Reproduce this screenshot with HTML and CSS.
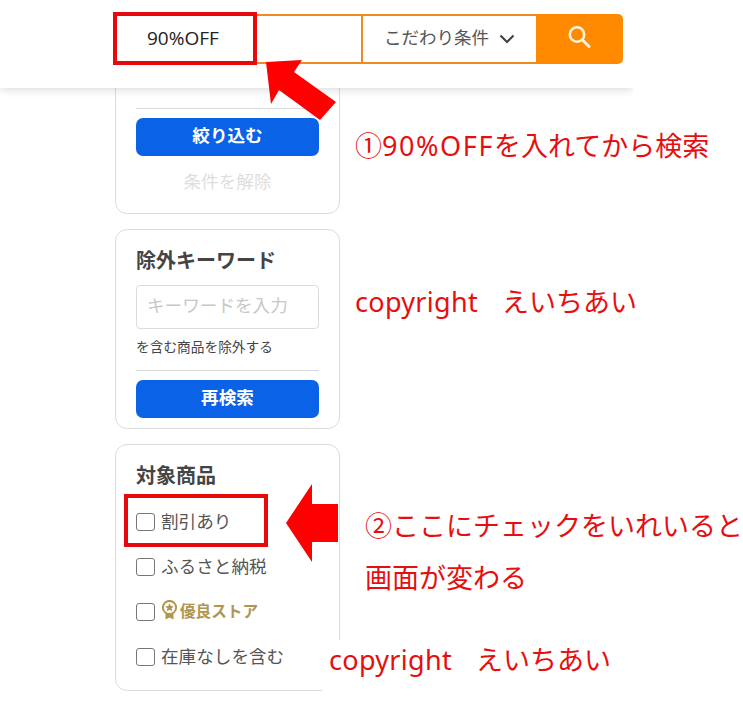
FILE: index.html
```html
<!DOCTYPE html>
<html lang="ja">
<head>
<meta charset="utf-8">
<title>検索</title>
<link rel="stylesheet" href="styles.css">
</head>
<body>
<div class="page">
  <header class="header">
    <div class="search">
      <div class="keyword">90%OFF</div>
      <div class="field"></div>
      <div class="filter">こだわり条件
        <svg class="chev" width="16" height="10" viewBox="0 0 16 10"><path d="M1.5 1.5 8 8l6.5-6.5" fill="none" stroke="#444" stroke-width="2.2"/></svg>
      </div>
      <button class="go" aria-label="検索">
        <svg width="26" height="26" viewBox="0 0 26 26"><circle cx="10" cy="10.5" r="7.2" fill="none" stroke="#fff3dc" stroke-width="2.6"/><path d="M15.5 16 22 22.5" stroke="#fff3dc" stroke-width="3" stroke-linecap="round"/></svg>
      </button>
    </div>
  </header>

  <main class="side">
    <section class="card card-first">
      <div class="rule"></div>
      <button class="btn">絞り込む</button>
      <div class="clear">条件を解除</div>
    </section>

    <section class="card card-exclude">
      <h2 class="title">除外キーワード</h2>
      <div class="input">キーワードを入力</div>
      <p class="note">を含む商品を除外する</p>
      <div class="rule rule-b"></div>
      <button class="btn">再検索</button>
    </section>

    <section class="card card-target">
      <h2 class="title">対象商品</h2>
      <ul class="checks">
        <li class="check"><span class="box"></span>割引あり</li>
        <li class="check"><span class="box"></span>ふるさと納税</li>
        <li class="check"><span class="box"></span>
          <span class="gold">
            <svg width="17" height="20" viewBox="0 0 17 20"><circle cx="8.5" cy="7.5" r="6.6" fill="none" stroke="#b0964f" stroke-width="2"/><path d="m8.5 3.2 1.3 2.7 3 .4-2.2 2 .6 3-2.7-1.5-2.7 1.5.6-3-2.2-2 3-.4z" fill="#b0964f"/><path d="M4.5 13.5v6l4-2 4 2v-6" fill="#b0964f"/></svg>
            優良ストア
          </span>
        </li>
        <li class="check"><span class="box"></span>在庫なしを含む</li>
      </ul>
    </section>
  </main>

  <div class="mask"></div>
  <div class="mark mark-top"></div>
  <div class="mark mark-check"></div>

  <svg class="arrow arrow-a" width="72" height="62" viewBox="0 0 72 62"><path d="M1 3 37 1 29 13 71 43 55 61 14 31 6 45z" fill="#f00"/></svg>
  <svg class="arrow arrow-b" width="53" height="78" viewBox="0 0 53 78"><path d="M0 39 26 0V20H52V58H26V78z" fill="#f00"/></svg>

  <p class="note-red n1">①<span class="wide">90%OFF</span>を入れてから検索</p>
  <p class="note-red n2"><span class="tight">copyright</span>　えいちあい</p>
  <p class="note-red n3">②ここにチェックをいれいると</p>
  <p class="note-red n4">画面が変わる</p>
  <p class="note-red n5"><span class="tight">copyright</span>　えいちあい</p>
</div>
</body>
</html>
```
FILE: styles.css
```css
* { box-sizing: border-box; }
html, body { margin: 0; padding: 0; background: #fff; }
body { font-family: "Noto Sans CJK JP", "Noto Sans", sans-serif; color: #444; }
.page { position: relative; width: 743px; height: 705px; overflow: hidden; }

.header {
  position: relative;
  z-index: 2;
  width: 633px;
  height: 88px;
  padding: 14px 0 0 115px;
  background: #fff;
  box-shadow: 0 2px 8px rgba(0,0,0,.14);
  clip-path: inset(0 0 -14px 0);
}
.search {
  display: flex;
  width: 508px;
  height: 50px;
  border-radius: 0 5px 5px 0;
}
.keyword {
  width: 142px;
  padding: 2px 0 0 32px;
  font: 19px/44px "Open Sans", sans-serif;
  color: #222;
}
.field {
  width: 106px;
  border: solid #ee8c22;
  border-width: 2px 2px 2px 0;
}
.filter {
  display: flex;
  align-items: center;
  gap: 10px;
  width: 173px;
  padding: 0 0 5px 21px;
  border: solid #ee8c22;
  border-width: 2px 0;
  font-size: 17.5px;
  color: #555;
}
.chev { margin-top: 4px; }
.go {
  display: flex;
  align-items: center;
  justify-content: center;
  width: 87px;
  padding: 0 0 4px;
  border: 0;
  border-radius: 0 5px 5px 0;
  background: #ff8a00;
}

.side {
  display: flex;
  flex-direction: column;
  gap: 15px;
  width: 225px;
  margin: -88px 0 0 115px;
}
.card {
  padding: 0 20px;
  border: 1px solid #dcdcdc;
  border-radius: 12px;
  background: #fff;
}
.card-first { height: 214px; padding-top: 107px; }
.card-exclude { height: 200px; padding-top: 14px; }
.card-target { height: 247px; padding-top: 14px; }

.rule { height: 1px; background: #d8d8d8; }
.rule-b { margin-top: 14px; }
.btn {
  display: block;
  width: 100%;
  height: 38px;
  margin-top: 9px;
  padding: 0 0 5px;
  border: 0;
  border-radius: 7px;
  background: #0a62e6;
  color: #fff;
  font: 700 17.6px/1.2 "Noto Sans CJK JP", sans-serif;
}
.clear {
  margin-top: 12px;
  text-align: center;
  font-size: 17.6px;
  line-height: 26px;
  color: #dedede;
}
.title {
  margin: 0;
  font-size: 20px;
  font-weight: 700;
  line-height: 32px;
  color: #444;
}
.input {
  height: 44px;
  margin-top: 9px;
  padding-left: 10px;
  border: 1px solid #dcdcdc;
  border-radius: 4px;
  font-size: 17.6px;
  line-height: 38px;
  color: #c8c8c8;
}
.note {
  margin: 7px 0 0;
  font-size: 13.7px;
  line-height: 20px;
  color: #444;
}
.checks {
  margin: 8px 0 0;
  padding: 0;
  list-style: none;
}
.check {
  display: flex;
  align-items: center;
  height: 45px;
  padding-bottom: 3px;
  font-size: 17.6px;
  color: #555;
}
.box {
  flex: none;
  width: 19px;
  height: 18px;
  margin: 3px 6px 0 0;
  border: 1px solid #777;
  border-radius: 3px;
  background: #fff;
}
.gold {
  display: flex;
  align-items: center;
  gap: 2px;
  font-size: 15.6px;
  font-weight: 700;
  color: #b0964f;
}

.mask {
  position: absolute;
  left: 322px;
  top: 640px;
  width: 60px;
  height: 65px;
  background: #fff;
}
.mark {
  position: absolute;
  z-index: 3;
  border: 4px solid #e80a0a;
}
.mark-top { left: 113px; top: 12px; width: 144px; height: 53px; }
.mark-check { left: 124px; top: 494px; width: 144px; height: 53px; }
.arrow { position: absolute; z-index: 3; }
.arrow-a { left: 265px; top: 59px; }
.arrow-b { left: 286px; top: 484px; }
.note-red {
  position: absolute;
  z-index: 3;
  margin: 0;
  white-space: nowrap;
  font-family: "Noto Sans", "Noto Sans CJK JP", sans-serif;
  font-size: 27px;
  line-height: 36px;
  color: #e60f0f;
}
.wide { letter-spacing: 1.6px; }
.tight { letter-spacing: .3px; margin-right: -3px; }
.n1 { left: 355px; top: 128px; }
.n2 { left: 355px; top: 284px; }
.n3 { left: 365px; top: 508px; }
.n4 { left: 365px; top: 560px; }
.n5 { left: 329px; top: 642px; }
```
